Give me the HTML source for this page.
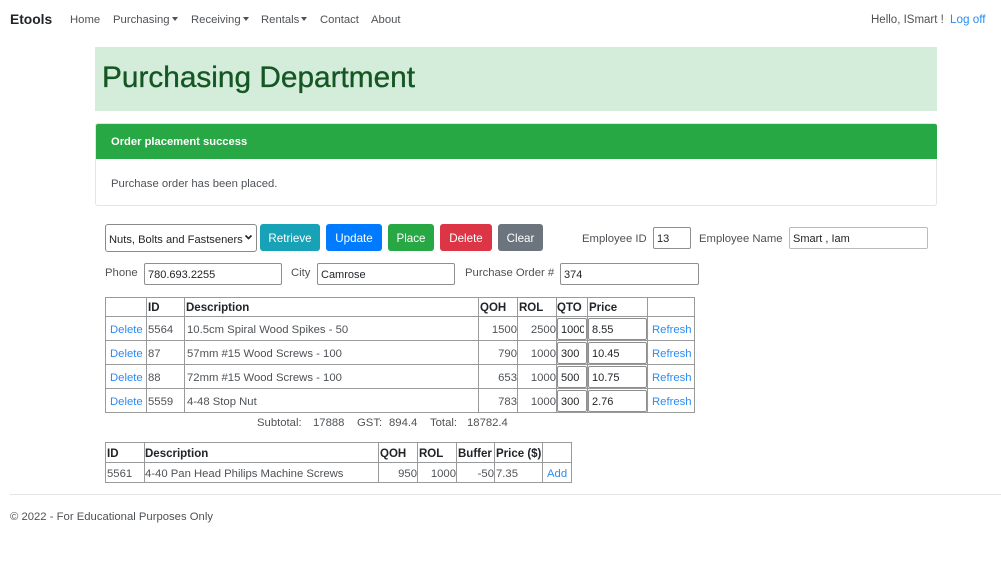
<!DOCTYPE html>
<html><head><meta charset="utf-8"><style>
html,body{margin:0;padding:0;background:#fff;width:1001px;height:567px;overflow:hidden}
body{position:relative;font-family:"Liberation Sans",sans-serif;font-size:11.3px;color:#212529}
.t{position:absolute;white-space:nowrap;line-height:14px;margin-top:1px}
.n{color:#4e5256}
.a{color:#2a8cf0}
.b{font-weight:bold;color:#212529;font-size:11.5px}
.r{text-align:right}
.box{position:absolute;box-sizing:border-box;background:#fff;border:1px solid #8f8f8f;border-radius:2px;overflow:hidden;white-space:nowrap;padding-left:3px;padding-top:1px;color:#212529;display:flex;align-items:center;font-size:11px}
.btn{position:absolute;top:224px;height:27px;padding-top:1px;box-sizing:border-box;border-radius:3px;color:#fff;display:flex;align-items:center;justify-content:center;font-size:11.6px}
.h{position:absolute;background:#9a9a9a;height:1px}
.v{position:absolute;background:#9a9a9a;width:1px}
.car{display:inline-block;width:0;height:0;border-left:3.5px solid transparent;border-right:3.5px solid transparent;border-top:4px solid #4e5256;margin-left:2px;vertical-align:2px}
</style></head><body>
<div class="t" style="left:10px;top:12px;font-size:13.8px;font-weight:bold;line-height:16px;margin-top:0">Etools</div>
<div class="t n" style="left:70px;top:12px">Home</div>
<div class="t n" style="left:113px;top:12px">Purchasing<span class="car"></span></div>
<div class="t n" style="left:191px;top:12px">Receiving<span class="car"></span></div>
<div class="t n" style="left:261px;top:12px">Rentals<span class="car"></span></div>
<div class="t n" style="left:320px;top:12px">Contact</div>
<div class="t n" style="left:371px;top:12px">About</div>
<div class="t n" style="left:871px;top:12px;font-size:11.5px">Hello, ISmart !</div>
<div class="t a" style="left:950px;top:12px;font-size:11.7px">Log off</div>

<div style="position:absolute;left:95px;top:47px;width:842px;height:64px;background:#d4edda"></div>
<div class="t" style="left:102px;top:60px;font-size:29.8px;line-height:36px;color:#155724;margin-top:0;-webkit-text-stroke:0.35px #155724">Purchasing Department</div>

<div style="position:absolute;left:95px;top:123px;width:842px;height:83px;box-sizing:border-box;border:1px solid #e4e4e4;border-radius:3px;background:#fff"></div>
<div style="position:absolute;left:96px;top:124px;width:841px;height:35px;background:#28a745;border-radius:2px 2px 0 0"></div>
<div class="t" style="left:111px;top:134px;color:#fff;font-weight:bold;font-size:11.2px">Order placement success</div>
<div class="t n" style="left:111px;top:176px">Purchase order has been placed.</div>

<div class="box" style="left:105px;top:224px;width:152px;height:28px;font-size:11.15px;padding-top:3px;border-radius:3px;border-color:#8a8a8a">Nuts, Bolts and Fastseners</div>
<svg style="position:absolute;left:244px;top:234px" width="10" height="7"><path d="M1.5 1.5L4.5 4.5L7.5 1.5" fill="none" stroke="#222" stroke-width="1.6"/></svg>
<div class="btn" style="left:260px;width:60px;background:#17a2b8">Retrieve</div>
<div class="btn" style="left:326px;width:56px;background:#007bff">Update</div>
<div class="btn" style="left:388px;width:46px;background:#28a745">Place</div>
<div class="btn" style="left:440px;width:52px;background:#dc3545">Delete</div>
<div class="btn" style="left:498px;width:45px;background:#6c757d">Clear</div>
<div class="t n" style="left:582px;top:231px">Employee ID</div>
<div class="box" style="left:653px;top:227px;width:38px;height:22px">13</div>
<div class="t n" style="left:699px;top:231px">Employee Name</div>
<div class="box" style="left:789px;top:227px;width:139px;height:22px;border-color:#bbb">Smart , Iam</div>

<div class="t n" style="left:105px;top:265px">Phone</div>
<div class="box" style="left:144px;top:263px;width:138px;height:22px">780.693.2255</div>
<div class="t n" style="left:291px;top:265px">City</div>
<div class="box" style="left:317px;top:263px;width:138px;height:22px">Camrose</div>
<div class="t n" style="left:465px;top:265px">Purchase Order #</div>
<div class="box" style="left:560px;top:263px;width:139px;height:22px">374</div>

<!-- table 1 -->
<div class="h" style="left:105px;top:297px;width:590px"></div>
<div class="h" style="left:105px;top:316px;width:590px"></div>
<div class="h" style="left:105px;top:340px;width:590px"></div>
<div class="h" style="left:105px;top:364px;width:590px"></div>
<div class="h" style="left:105px;top:388px;width:590px"></div>
<div class="h" style="left:105px;top:412px;width:590px"></div>
<div class="v" style="left:105px;top:297px;height:116px"></div>
<div class="v" style="left:146px;top:297px;height:116px"></div>
<div class="v" style="left:184px;top:297px;height:116px"></div>
<div class="v" style="left:478px;top:297px;height:116px"></div>
<div class="v" style="left:517px;top:297px;height:116px"></div>
<div class="v" style="left:556px;top:297px;height:116px"></div>
<div class="v" style="left:587px;top:297px;height:116px"></div>
<div class="v" style="left:647px;top:297px;height:116px"></div>
<div class="v" style="left:694px;top:297px;height:116px"></div>

<div class="t b" style="left:148px;top:300px">ID</div>
<div class="t b" style="left:186px;top:300px">Description</div>
<div class="t b" style="left:480px;top:300px">QOH</div>
<div class="t b" style="left:519px;top:300px">ROL</div>
<div class="t b" style="left:557px;top:300px">QTO</div>
<div class="t b" style="left:589px;top:300px">Price</div>

<div class="t a" style="left:110px;top:322px">Delete</div>
<div class="t n" style="left:148px;top:322px">5564</div>
<div class="t n" style="left:187px;top:322px">10.5cm Spiral Wood Spikes - 50</div>
<div class="t n r" style="left:478px;width:39px;top:322px">1500</div>
<div class="t n r" style="left:517px;width:39px;top:322px">2500</div>
<div class="box" style="left:557px;top:318px;width:30px;height:22px"><span style="display:block;width:23px;overflow:hidden;flex:none">1000</span></div>
<div class="box" style="left:588px;top:318px;width:59px;height:22px">8.55</div>
<div class="t a" style="left:652px;top:322px">Refresh</div>

<div class="t a" style="left:110px;top:346px">Delete</div>
<div class="t n" style="left:148px;top:346px">87</div>
<div class="t n" style="left:187px;top:346px">57mm #15 Wood Screws - 100</div>
<div class="t n r" style="left:478px;width:39px;top:346px">790</div>
<div class="t n r" style="left:517px;width:39px;top:346px">1000</div>
<div class="box" style="left:557px;top:342px;width:30px;height:22px">300</div>
<div class="box" style="left:588px;top:342px;width:59px;height:22px">10.45</div>
<div class="t a" style="left:652px;top:346px">Refresh</div>

<div class="t a" style="left:110px;top:370px">Delete</div>
<div class="t n" style="left:148px;top:370px">88</div>
<div class="t n" style="left:187px;top:370px">72mm #15 Wood Screws - 100</div>
<div class="t n r" style="left:478px;width:39px;top:370px">653</div>
<div class="t n r" style="left:517px;width:39px;top:370px">1000</div>
<div class="box" style="left:557px;top:366px;width:30px;height:22px">500</div>
<div class="box" style="left:588px;top:366px;width:59px;height:22px">10.75</div>
<div class="t a" style="left:652px;top:370px">Refresh</div>

<div class="t a" style="left:110px;top:394px">Delete</div>
<div class="t n" style="left:148px;top:394px">5559</div>
<div class="t n" style="left:187px;top:394px">4-48 Stop Nut</div>
<div class="t n r" style="left:478px;width:39px;top:394px">783</div>
<div class="t n r" style="left:517px;width:39px;top:394px">1000</div>
<div class="box" style="left:557px;top:390px;width:30px;height:22px">300</div>
<div class="box" style="left:588px;top:390px;width:59px;height:22px">2.76</div>
<div class="t a" style="left:652px;top:394px">Refresh</div>

<div class="t n" style="left:257px;top:415px">Subtotal:</div>
<div class="t n" style="left:313px;top:415px">17888</div>
<div class="t n" style="left:357px;top:415px">GST:</div>
<div class="t n" style="left:389px;top:415px">894.4</div>
<div class="t n" style="left:430px;top:415px">Total:</div>
<div class="t n" style="left:467px;top:415px">18782.4</div>

<!-- table 2 -->
<div class="h" style="left:105px;top:442px;width:467px"></div>
<div class="h" style="left:105px;top:462px;width:467px"></div>
<div class="h" style="left:105px;top:482px;width:467px"></div>
<div class="v" style="left:105px;top:442px;height:41px"></div>
<div class="v" style="left:144px;top:442px;height:41px"></div>
<div class="v" style="left:378px;top:442px;height:41px"></div>
<div class="v" style="left:417px;top:442px;height:41px"></div>
<div class="v" style="left:456px;top:442px;height:41px"></div>
<div class="v" style="left:494px;top:442px;height:41px"></div>
<div class="v" style="left:542px;top:442px;height:41px"></div>
<div class="v" style="left:571px;top:442px;height:41px"></div>

<div class="t b" style="left:107px;top:446px">ID</div>
<div class="t b" style="left:145px;top:446px">Description</div>
<div class="t b" style="left:380px;top:446px">QOH</div>
<div class="t b" style="left:419px;top:446px">ROL</div>
<div class="t b" style="left:458px;top:446px">Buffer</div>
<div class="t b" style="left:496px;top:446px">Price ($)</div>
<div class="t n" style="left:107px;top:466px">5561</div>
<div class="t n" style="left:145px;top:466px">4-40 Pan Head Philips Machine Screws</div>
<div class="t n r" style="left:378px;width:39px;top:466px">950</div>
<div class="t n r" style="left:417px;width:39px;top:466px">1000</div>
<div class="t n r" style="left:456px;width:38px;top:466px">-50</div>
<div class="t n" style="left:496px;top:466px">7.35</div>
<div class="t a" style="left:547px;top:466px">Add</div>

<div style="position:absolute;left:10px;top:494px;width:991px;height:1px;background:#e5e5e5"></div>
<div class="t n" style="left:10px;top:509px">© 2022 - For Educational Purposes Only</div>
</body></html>
